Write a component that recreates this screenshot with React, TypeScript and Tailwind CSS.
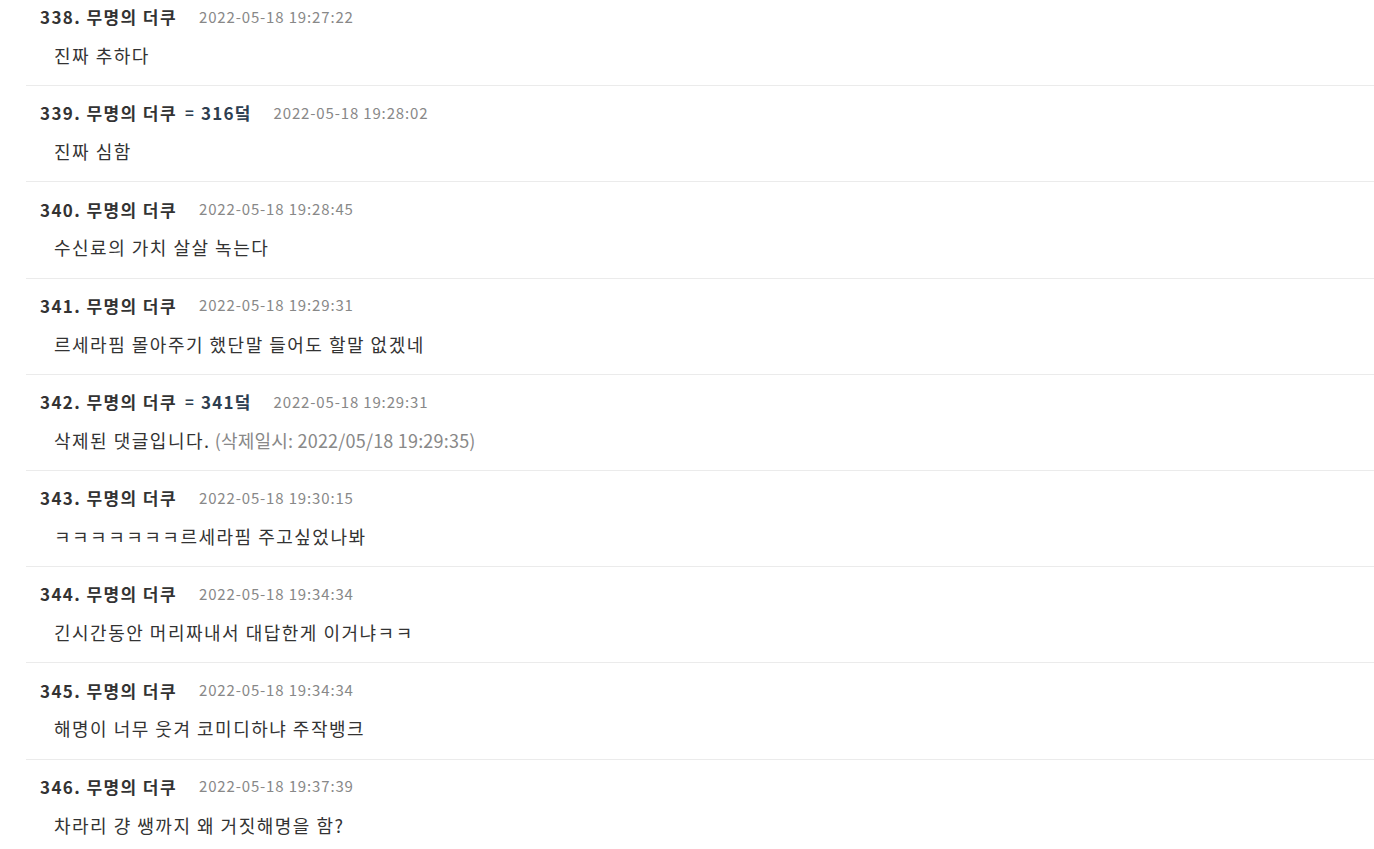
import React from "react";

type Item = {
  no: number;
  reply?: string;
  date: string;
  body: string;
  deleted?: string;
};

const items: Item[] = [
  { no: 338, date: "2022-05-18 19:27:22", body: "진짜 추하다" },
  { no: 339, reply: "316덬", date: "2022-05-18 19:28:02", body: "진짜 심함" },
  { no: 340, date: "2022-05-18 19:28:45", body: "수신료의 가치 살살 녹는다" },
  { no: 341, date: "2022-05-18 19:29:31", body: "르세라핌 몰아주기 했단말 들어도 할말 없겠네" },
  {
    no: 342,
    reply: "341덬",
    date: "2022-05-18 19:29:31",
    body: "삭제된 댓글입니다.",
    deleted: "(삭제일시: 2022/05/18 19:29:35)",
  },
  { no: 343, date: "2022-05-18 19:30:15", body: "ㅋㅋㅋㅋㅋㅋㅋ르세라핌 주고싶었나봐" },
  { no: 344, date: "2022-05-18 19:34:34", body: "긴시간동안 머리짜내서 대답한게 이거냐ㅋㅋ" },
  { no: 345, date: "2022-05-18 19:34:34", body: "해명이 너무 웃겨 코미디하냐 주작뱅크" },
  { no: 346, date: "2022-05-18 19:37:39", body: "차라리 걍 쌩까지 왜 거짓해명을 함?" },
];

export default function App() {
  return (
    <div
      className="w-[1374px] h-[849px] overflow-hidden bg-white"
      style={{ fontFamily: '"Noto Sans CJK KR", "Noto Sans", sans-serif' }}
    >
      <ul className="ml-[26px] mt-[-11px]">
        {items.map((it) => (
          <li key={it.no} className="h-[96.2px] border-t border-[#ebebeb] pl-[14px] pt-[15px]">
            <div className="flex items-center h-[24px] whitespace-nowrap">
              <span className="text-[17px] font-bold text-[#333] tracking-[1.4px]">
                {it.no}. 무명의 더쿠
              </span>
              {it.reply && (
                <span className="flex items-center text-[17px] font-bold text-[#2d3e50] tracking-[1.2px]">
                  <span className="ml-[8px] text-[15px]">=</span>
                  <span className="ml-[6px]">{it.reply}</span>
                </span>
              )}
              <span className="ml-[22px] text-[15px] text-[#888] tracking-[0.85px]">{it.date}</span>
            </div>
            <div className="mt-[14px] pl-[14px] text-[18px] text-[#333] leading-[24px] tracking-[1.5px] whitespace-nowrap">
              {it.body}
              {it.deleted && <span className="text-[#888] tracking-[0.2px]"> {it.deleted}</span>}
            </div>
          </li>
        ))}
      </ul>
    </div>
  );
}
